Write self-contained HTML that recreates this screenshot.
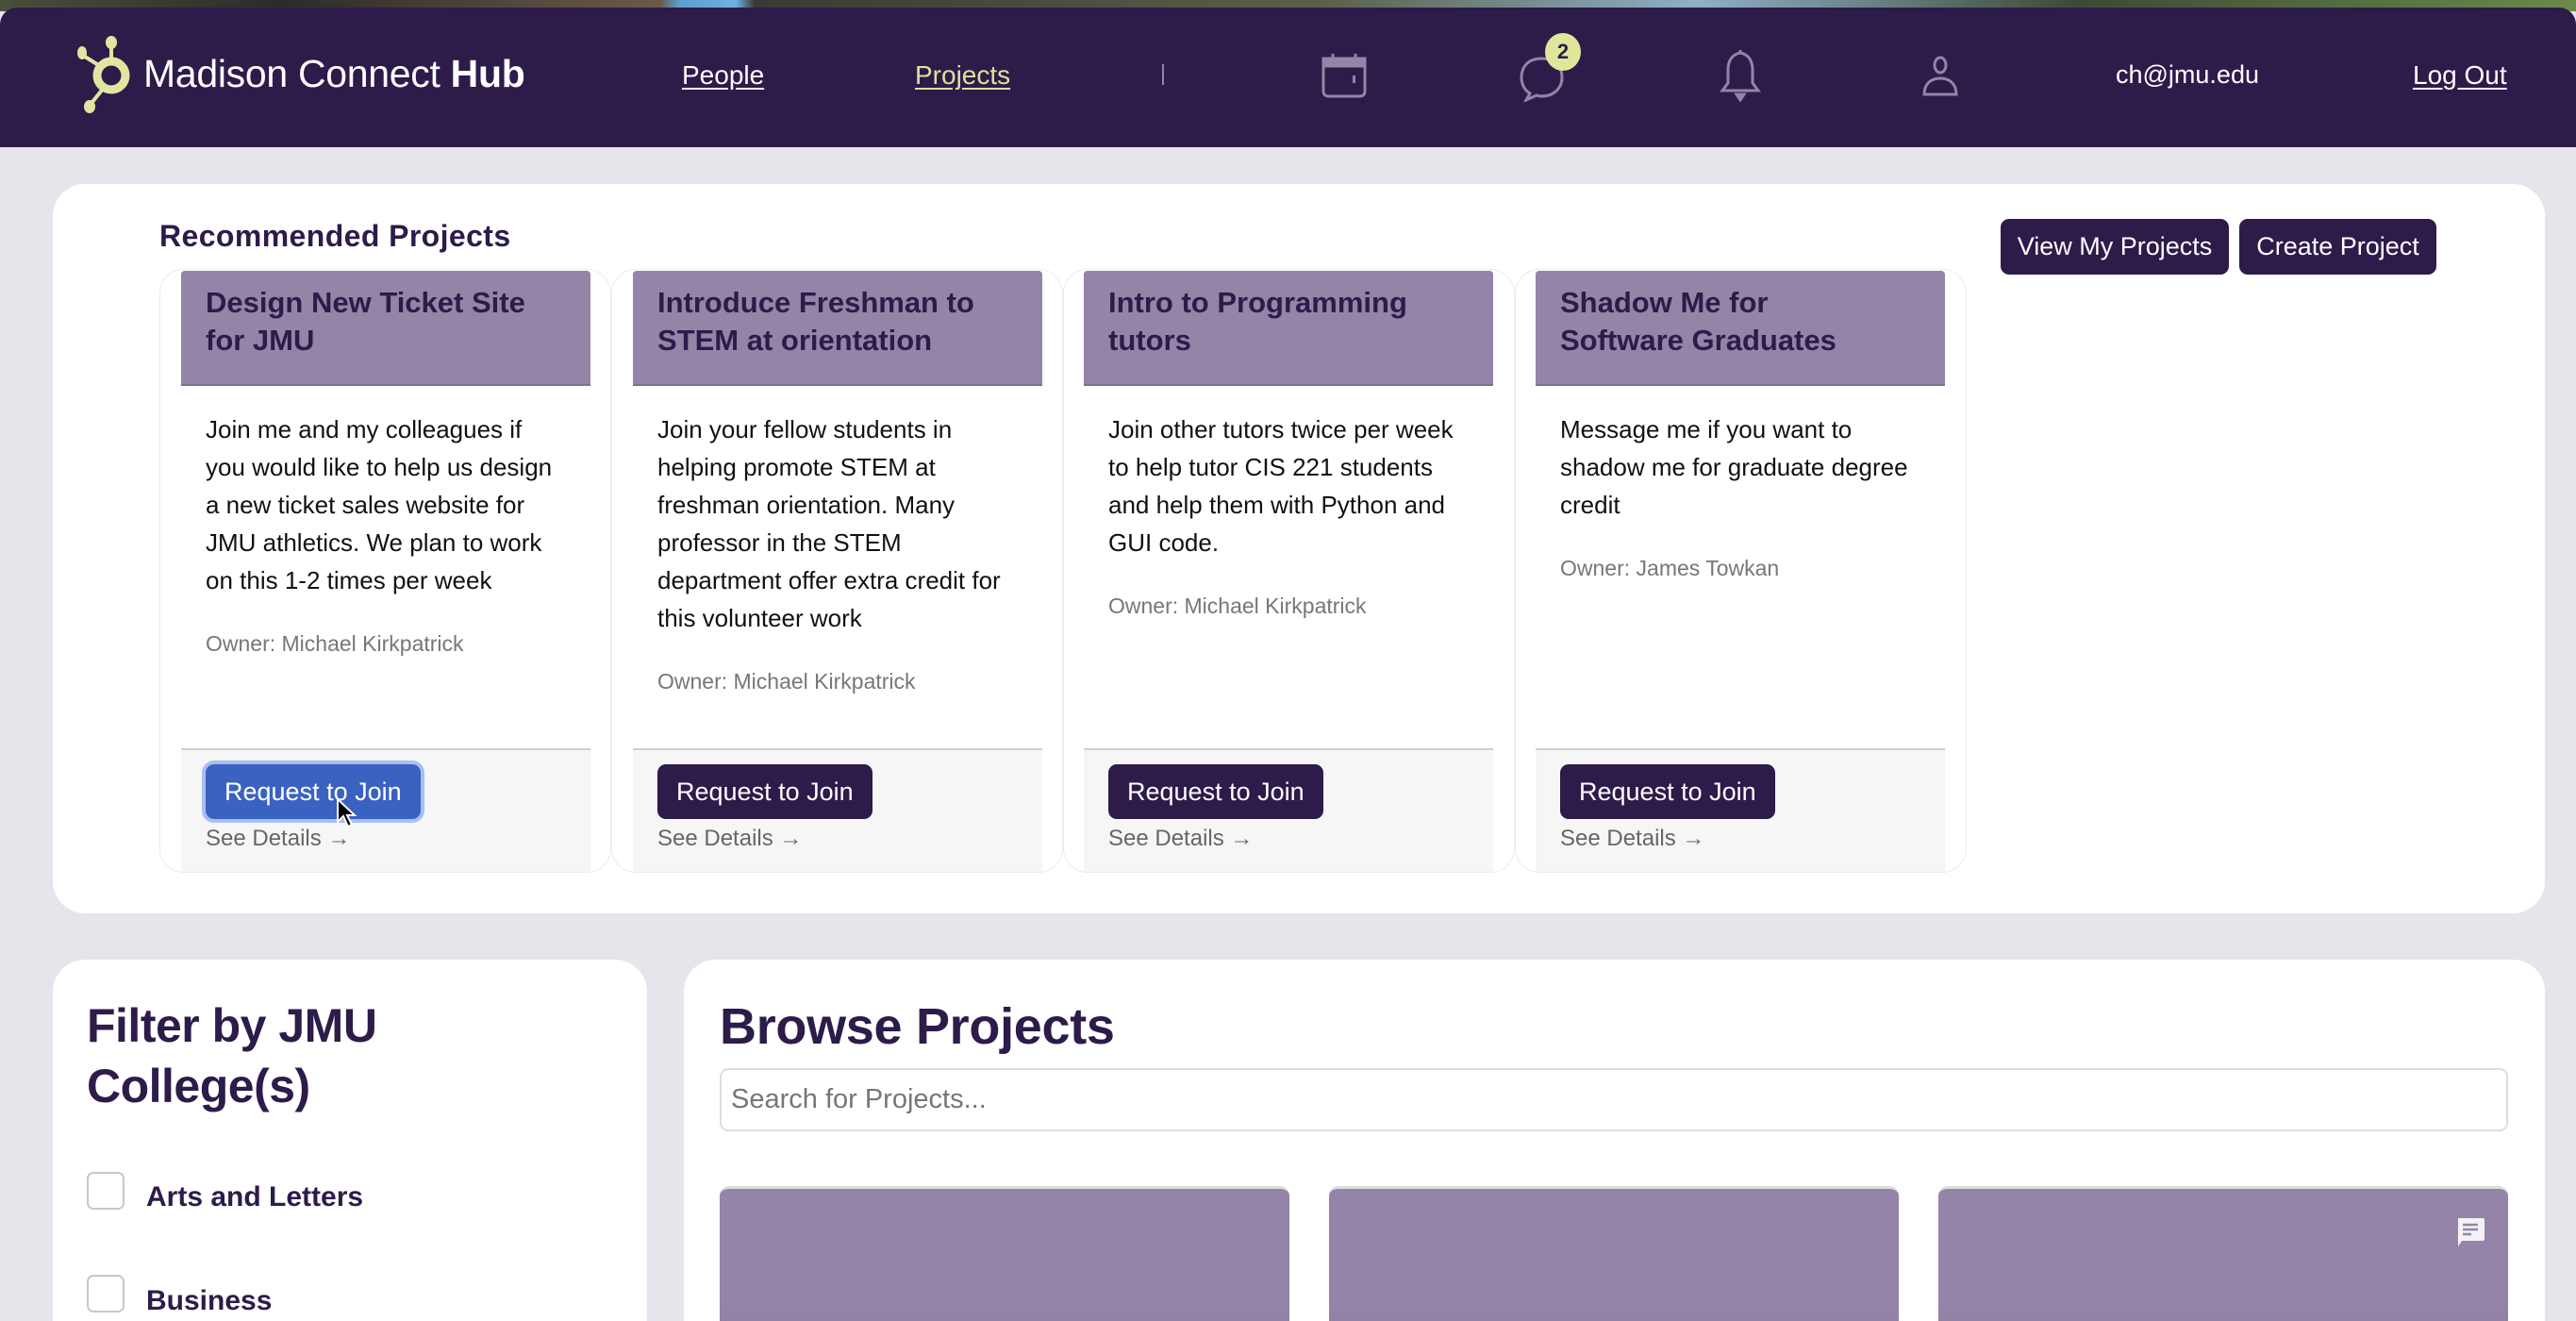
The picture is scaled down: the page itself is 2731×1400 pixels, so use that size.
<!DOCTYPE html>
<html><head><meta charset="utf-8"><style>
*{box-sizing:border-box;margin:0;padding:0}
html{width:2731px;height:1400px;overflow:hidden}
body{width:2731px;height:1400px;overflow:hidden;background:#e7e4ec;font-family:"Liberation Sans",Arial,sans-serif;position:relative}
.abs{position:absolute}
.strip{left:0;top:0;width:2731px;height:12px;background:linear-gradient(90deg,#4a4f3a 0,#2c2c28 300px,#6a5a48 700px,#5aa0d0 720px,#6fb0e0 780px,#3a3a33 800px,#5a6048 1400px,#8fb0c8 1800px,#3d4a35 2200px,#6a8a4a 2731px)}
.hdr{left:0;top:8px;width:2731px;height:148px;background:#2d1b4a;border-radius:18px 18px 0 0}
.nav{color:#fff;font-size:28px;text-decoration:underline;text-underline-offset:4px}
.panel{background:#fff;border-radius:34px}
.card{width:434px;height:637px;border-radius:10px}
.wrap{border:1px solid #eeeaf2;border-radius:26px;background:#fff}
.ch{position:absolute;left:0;top:0;width:434px;height:122px;background:#9484a7;border-bottom:2px solid #7d6e92;padding:14px 50px 0 26px;font-weight:bold;font-size:31px;line-height:40px;color:#2d1b4a;border-radius:4px 4px 0 0}
.cb{position:absolute;left:26px;top:148px;width:378px;font-size:26px;line-height:40px;color:#111}
.own{position:absolute;left:26px;font-size:23px;color:#777}
.cf{position:absolute;left:0;top:506px;width:434px;height:131px;background:#f6f6f6;border-top:2px solid #cfcfcf}
.btn{position:absolute;left:26px;top:15px;height:58px;padding:0 20px;background:#2d1b4a;color:#fff;font-size:27px;line-height:58px;border-radius:9px;white-space:nowrap}
.sd{position:absolute;left:26px;top:80px;font-size:24px;color:#666}
.pb{background:#2d1b4a;color:#fff;font-size:27px;line-height:59px;height:59px;border-radius:9px;text-align:center}
.cbx{width:40px;height:40px;border:2px solid #c8c8c8;border-radius:7px;background:#fff}
.lab{font-weight:bold;font-size:30px;color:#2d1b4a}
.gc{width:604px;height:200px;background:linear-gradient(#9484a7,#9484a7 60%,#8a7a9c);border-radius:10px 10px 0 0;border-top:3px solid #ddd}
</style></head><body>
<div class="abs strip"></div>
<div class="abs hdr"></div>
<svg class="abs" style="left:80px;top:38px" width="72" height="82" viewBox="0 0 72 82">
<g fill="#dfe6a0" stroke="#dfe6a0">
<circle cx="38" cy="42" r="15" fill="none" stroke-width="9"/>
<line x1="38" y1="27" x2="38" y2="10" stroke-width="4"/>
<ellipse cx="38" cy="7" rx="6" ry="7" stroke="none"/>
<line x1="26" y1="32" x2="10" y2="22" stroke-width="4"/>
<ellipse cx="7" cy="18" rx="5" ry="7" stroke="none"/>
<line x1="30" y1="55" x2="18" y2="70" stroke-width="4"/>
<ellipse cx="15" cy="75" rx="6" ry="7" stroke="none"/>
</g></svg>
<div class="abs" style="left:152px;top:55px;font-size:41px;color:#fff;letter-spacing:-0.3px">Madison Connect <b>Hub</b></div>
<div class="abs nav" style="left:723px;top:64px">People</div>
<div class="abs nav" style="left:970px;top:64px;color:#d7e49a">Projects</div>
<div class="abs" style="left:1232px;top:68px;width:2px;height:22px;background:#9484a7"></div>
<svg class="abs" style="left:1400px;top:54px" width="50" height="50" viewBox="0 0 50 50" fill="none" stroke="#9484a7" stroke-width="3"><rect x="3" y="8" width="44" height="40" rx="5"/><rect x="3" y="8" width="44" height="8" fill="#9484a7"/><line x1="13" y1="3" x2="13" y2="9"/><line x1="37" y1="3" x2="37" y2="9"/><rect x="34" y="26" width="3" height="8" fill="#9484a7" stroke="none"/></svg>
<svg class="abs" style="left:1610px;top:58px" width="50" height="50" viewBox="0 0 50 50" fill="none" stroke="#9484a7" stroke-width="3"><path d="M24 4 C10 4 3 13 3 24 C3 32 7 38 12 41 L8 48 L19 43 C21 44 23 44 24 44 C38 44 46 35 46 24 C46 13 38 4 24 4 Z"/></svg>
<div class="abs" style="left:1638px;top:35px;width:38px;height:40px;border-radius:50%;background:#dfe79a;color:#2d1b4a;font-weight:bold;font-size:22px;text-align:center;line-height:40px">2</div>
<svg class="abs" style="left:1822px;top:52px" width="46" height="56" viewBox="0 0 46 56" fill="none" stroke="#9484a7" stroke-width="3"><path d="M23 4 C13 6 10 14 10 22 L10 36 L4 44 L42 44 L36 36 L36 22 C36 14 33 6 23 4 Z"/><path d="M19 48 L27 48 L23 54 Z" fill="#9484a7"/><line x1="23" y1="1" x2="23" y2="5"/></svg>
<svg class="abs" style="left:2036px;top:58px" width="42" height="46" viewBox="0 0 42 46" fill="none" stroke="#9484a7" stroke-width="3"><ellipse cx="21" cy="11" rx="6" ry="8"/><path d="M4 42 C4 30 12 25 21 25 C30 25 38 30 38 42 Z"/></svg>
<div class="abs" style="left:2243px;top:64px;font-size:27px;color:#fff">ch@jmu.edu</div>
<div class="abs nav" style="left:2558px;top:64px">Log Out</div>

<div class="abs panel" style="left:56px;top:195px;width:2642px;height:773px"></div>
<div class="abs" style="left:169px;top:232px;font-size:32px;font-weight:bold;color:#2d1b4a;letter-spacing:0.4px">Recommended Projects</div>
<div class="abs pb" style="left:2121px;top:232px;width:242px">View My Projects</div>
<div class="abs pb" style="left:2374px;top:232px;width:209px">Create Project</div>

<div class="abs wrap" style="left:169px;top:285px;width:479px;height:640px"></div>
<div class="abs wrap" style="left:648px;top:285px;width:479px;height:640px"></div>
<div class="abs wrap" style="left:1127px;top:285px;width:479px;height:640px"></div>
<div class="abs wrap" style="left:1606px;top:285px;width:479px;height:640px"></div>

<div class="abs card" style="left:192px;top:287px">
<div class="ch">Design New Ticket Site for JMU</div>
<div class="cb">Join me and my colleagues if you would like to help us design a new ticket sales website for JMU athletics. We plan to work on this 1-2 times per week</div>
<div class="own" style="top:382px">Owner: Michael Kirkpatrick</div>
<div class="cf"><div class="btn" style="background:#3a62c0;box-shadow:0 0 0 4px #a9bff0">Request to Join</div><div class="sd">See Details →</div></div>
<svg class="abs" style="left:164px;top:558px" width="26" height="34" viewBox="0 0 26 34"><path d="M2 2 L2 26 L8 20 L13 31 L17 29 L12 19 L20 19 Z" fill="#000" stroke="#fff" stroke-width="2"/></svg>
</div>
<div class="abs card" style="left:671px;top:287px">
<div class="ch">Introduce Freshman to STEM at orientation</div>
<div class="cb">Join your fellow students in helping promote STEM at freshman orientation. Many professor in the STEM department offer extra credit for this volunteer work</div>
<div class="own" style="top:422px">Owner: Michael Kirkpatrick</div>
<div class="cf"><div class="btn">Request to Join</div><div class="sd">See Details →</div></div>
</div>
<div class="abs card" style="left:1149px;top:287px">
<div class="ch">Intro to Programming tutors</div>
<div class="cb">Join other tutors twice per week to help tutor CIS 221 students and help them with Python and GUI code.</div>
<div class="own" style="top:342px">Owner: Michael Kirkpatrick</div>
<div class="cf"><div class="btn">Request to Join</div><div class="sd">See Details →</div></div>
</div>
<div class="abs card" style="left:1628px;top:287px">
<div class="ch">Shadow Me for Software Graduates</div>
<div class="cb">Message me if you want to shadow me for graduate degree credit</div>
<div class="own" style="top:302px">Owner: James Towkan</div>
<div class="cf"><div class="btn">Request to Join</div><div class="sd">See Details →</div></div>
</div>

<div class="abs panel" style="left:56px;top:1017px;width:630px;height:420px"></div>
<div class="abs" style="left:92px;top:1055px;font-size:50px;line-height:64px;font-weight:bold;color:#2d1b4a;letter-spacing:-0.5px">Filter by JMU<br>College(s)</div>
<div class="abs cbx" style="left:92px;top:1242px"></div>
<div class="abs lab" style="left:155px;top:1252px">Arts and Letters</div>
<div class="abs cbx" style="left:92px;top:1351px"></div>
<div class="abs lab" style="left:155px;top:1362px">Business</div>

<div class="abs panel" style="left:725px;top:1017px;width:1973px;height:420px"></div>
<div class="abs" style="left:763px;top:1057px;font-size:54px;font-weight:bold;color:#2d1b4a;letter-spacing:-0.3px">Browse Projects</div>
<div class="abs" style="left:763px;top:1132px;width:1896px;height:67px;border:2px solid #ddd;border-radius:9px;background:#fff;font-size:29px;color:#777;padding:0 0 0 10px;line-height:63px">Search for Projects...</div>
<div class="abs gc" style="left:763px;top:1257px"></div>
<div class="abs gc" style="left:1409px;top:1257px"></div>
<div class="abs gc" style="left:2055px;top:1257px"></div>
<svg class="abs" style="left:2603px;top:1289px" width="32" height="34" viewBox="0 0 32 34"><path d="M3 2 H29 Q31 2 31 4 V24 Q31 26 29 26 H7 L3 32 Z" fill="#f4f2f6"/><g stroke="#9484a7" stroke-width="2.5"><line x1="8" y1="9" x2="24" y2="9"/><line x1="8" y1="14" x2="24" y2="14"/><line x1="8" y1="19" x2="17" y2="19"/></g></svg>
</body></html>
